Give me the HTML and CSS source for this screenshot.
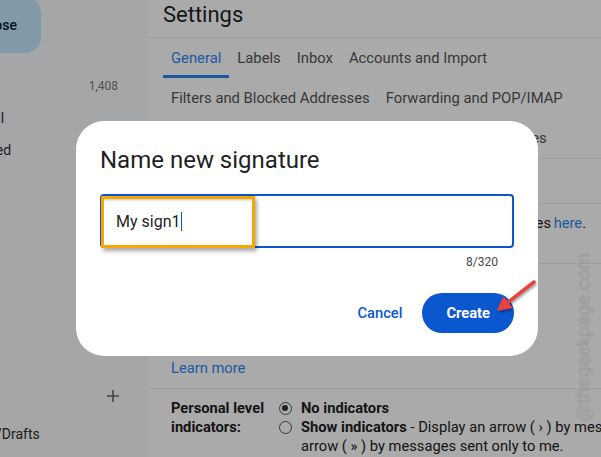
FILE: index.html
```html
<!DOCTYPE html>
<html lang="en">

<head>
    <meta charset="UTF-8">
    <meta name="viewport" content="width=device-width, initial-scale=1.0">
    <title>Settings - Name new signature</title>
    <link rel="stylesheet" href="styles.css">
</head>

<body>
    <div class="app">
        <aside class="sidebar">
            <div class="compose">Compose</div>
            <nav class="nav">
                <div class="nav-item"><span>Inbox</span><span class="count">1,408</span></div>
                <div class="nav-item"><span>Social</span></div>
                <div class="nav-item"><span>Starred</span></div>
            </nav>
            <div class="labels-head">
                <span>Labels</span>
                <svg class="plus" width="12" height="12" viewBox="0 0 12 12">
                    <path d="M6 0v12M0 6h12" stroke="currentColor" stroke-width="1.6" />
                </svg>
            </div>
            <div class="nav-item sub"><span>[Imap]/Drafts</span></div>
        </aside>

        <main class="main">
            <header class="settings-head">
                <h1>Settings</h1>
            </header>

            <div class="tabs">
                <div class="tab-row">
                    <span class="tab active">General</span>
                    <span class="tab">Labels</span>
                    <span class="tab">Inbox</span>
                    <span class="tab">Accounts and Import</span>
                </div>
                <div class="tab-row">
                    <span class="tab">Filters and Blocked Addresses</span>
                    <span class="tab">Forwarding and POP/IMAP</span>
                </div>
                <div class="tab-row">
                    <span class="tab">Add-ons</span>
                    <span class="tab">Chat and Meet</span>
                    <span class="tab">Advanced</span>
                    <span class="tab">Offline</span>
                    <span class="tab">Themes</span>
                </div>
            </div>

            <div class="setting picture">
                <div class="setting-label">My picture:</div>
                <div class="setting-value">Change picture</div>
            </div>

            <div class="setting ads">
                <div class="setting-label">Ad signals:</div>
                <div class="setting-value">You can view and change your preferences <a href="#">here</a>.</div>
            </div>

            <div class="setting">
                <div class="setting-label">
                    Signature:
                    <span class="note">(appended at the end of all outgoing messages)</span>
                    <a href="#">Learn more</a>
                </div>
                <div class="setting-value">
                    <div>No signatures</div>
                    <span class="create-new">+ Create new</span>
                </div>
            </div>

            <div class="setting">
                <div class="setting-label">Personal level indicators:</div>
                <div class="setting-value">
                    <div class="option"><span class="radio checked"></span><span><b>No indicators</b></span></div>
                    <div class="option"><span class="radio"></span><span><b>Show indicators</b> - Display an arrow ( › ) by messages sent to my address (not a mailing list), and a double arrow ( » ) by messages sent only to me.</span></div>
                </div>
            </div>
        </main>
    </div>

    <div class="scrim"></div>

    <div class="dialog">
        <h2 class="dialog-title">Name new signature</h2>
        <div class="field">
            <div class="field-input"><span>My sign1</span><span class="caret"></span></div>
            <div class="highlight"></div>
        </div>
        <div class="counter">8/320</div>
        <div class="actions">
            <button class="btn-text">Cancel</button>
            <button class="btn-filled">Create</button>
        </div>
    </div>

    <svg class="pointer" width="56" height="46" viewBox="0 0 56 46">
        <path d="M44 7 L17.5 27.6" stroke="#e8433f" stroke-width="3.5" stroke-linecap="round" />
        <path d="M8 35 L21.5 32.5 L13.6 22.6 Z" fill="#e8433f" stroke="#e8433f" stroke-width="1.5" stroke-linejoin="round" />
    </svg>

    <div class="watermark">@thegeekpage.com</div>
</body>

</html>
```

FILE: styles.css
```css
* {
    box-sizing: border-box;
}

body {
    margin: 0;
    overflow: hidden;
    font-family: Roboto, "Liberation Sans", sans-serif;
    font-size: 14px;
    color: #1f1f1f;
    background: #fff;
}

a {
    color: #2c86f5;
    text-decoration: none;
}

.app {
    display: flex;
    width: 980px;
    height: 457px;
    overflow: hidden;
}

/* left nav, scrolled partly out of view */
.sidebar {
    width: 148px;
    flex: none;
    overflow: hidden;
    background: #f8f9fc;
    color: #2e2e2e;
}

.compose {
    display: flex;
    align-items: center;
    justify-content: flex-end;
    width: 151px;
    height: 56px;
    margin: -3px 0 17px -110px;
    padding-right: 24px;
    border-radius: 16px;
    background: #c4e6fc;
    color: #001d35;
    font-weight: 500;
}

.nav-item {
    display: flex;
    align-items: center;
    height: 32px;
    margin-left: -50px;
    padding: 0 30px 0 16px;
}

.count {
    margin-left: auto;
    font-size: 12px;
    color: #7a7a7a;
}

.labels-head {
    display: flex;
    align-items: center;
    justify-content: space-between;
    height: 44px;
    margin: 208px 0 0 -90px;
    padding: 0 29px 0 12px;
    font-size: 16px;
}

.plus {
    color: #666;
}

.nav-item.sub {
    padding-left: 7px;
}

/* settings page */
.main {
    flex: 1;
    background: #fff;
    font-size: 14.7px;
}

.settings-head {
    height: 38px;
    padding-left: 15px;
    border-bottom: 1px solid #ececec;
}

.settings-head h1 {
    margin: 0;
    font-size: 22px;
    font-weight: 400;
    line-height: 30px;
    color: #1f1f1f;
}

.tabs {
    padding-left: 15px;
    border-bottom: 1px solid #ececec;
    font-size: 14.8px;
}

.tab-row {
    display: flex;
    height: 40px;
}

.tab {
    display: flex;
    align-items: center;
    padding: 0 8px;
    color: #555;
}

.tab.active {
    color: #2c86f5;
    box-shadow: inset 0 -3px #2c86f5;
}

.setting {
    display: grid;
    grid-template-columns: 108px 1fr;
    padding: 10px 0 10px 23px;
    line-height: 19px;
    border-bottom: 1px solid #ececec;
}

.setting.picture {
    min-height: 45px;
}

.setting.ads {
    min-height: 60px;
}

.setting.ads .setting-value {
    word-spacing: -1px;
}

.setting-label {
    font-weight: 700;
    color: #222;
}

.setting-label .note {
    display: block;
    margin: 2px 0 16px;
    font-size: 12px;
    line-height: 16px;
    font-weight: 400;
    color: #666;
}

.setting-label a {
    font-weight: 400;
}

.setting-value {
    width: 730px;
    color: #222;
}

.create-new {
    display: inline-block;
    margin-top: 10px;
    padding: 8px 16px;
    border-radius: 18px;
    color: #2c86f5;
}

.option {
    display: flex;
    gap: 9px;
}

.radio {
    flex: none;
    width: 13px;
    height: 13px;
    margin-top: 3px;
    border: 1.5px solid #555;
    border-radius: 50%;
    position: relative;
}

.radio.checked::after {
    content: "";
    position: absolute;
    left: 2px;
    top: 2px;
    width: 6px;
    height: 6px;
    border-radius: 50%;
    background: #333;
}

/* modal */
.scrim {
    position: fixed;
    inset: 0;
    background: rgba(0, 0, 0, 0.333);
}

.dialog {
    position: absolute;
    left: 76px;
    top: 121px;
    width: 462px;
    height: 235px;
    padding: 23px 24px;
    border-radius: 28px;
    background: #fff;
}

.dialog-title {
    margin: 0 0 18px;
    font-size: 24px;
    font-weight: 400;
    line-height: 32px;
    color: #1f1f1f;
}

.field {
    position: relative;
}

.field-input {
    display: flex;
    align-items: center;
    height: 54px;
    padding-left: 14px;
    border: 2px solid #0b57d0;
    border-radius: 4px;
    font-size: 16px;
    color: #1f1f1f;
}

.caret {
    width: 1px;
    height: 19px;
    margin-left: 1px;
    background: #0b57d0;
}

.highlight {
    position: absolute;
    left: 1px;
    top: 2px;
    width: 154px;
    height: 52px;
    border: 3px solid #f7a800;
    box-shadow: 2px 3px 4px rgba(0, 0, 0, 0.35), inset 0 3px 3px -2px rgba(0, 0, 0, 0.25);
}

.counter {
    margin-top: 6px;
    padding-right: 16px;
    text-align: right;
    font-size: 12px;
    line-height: 16px;
    color: #444746;
}

.actions {
    display: flex;
    justify-content: flex-end;
    gap: 8px;
    margin-top: 23px;
}

.actions button {
    height: 40px;
    border: 0;
    border-radius: 20px;
    font-family: inherit;
    font-size: 14.7px;
}

.btn-text {
    padding: 0 12px;
    background: none;
    color: #0b57d0;
    font-weight: 500;
}

.btn-filled {
    padding: 0 24px;
    background: #0b57d0;
    color: #fff;
    font-weight: 700;
}

/* annotation arrow and watermark */
.pointer {
    position: absolute;
    left: 490px;
    top: 275px;
    filter: drop-shadow(1px 2px 1px rgba(0, 0, 0, 0.35));
}

.watermark {
    position: absolute;
    left: 583px;
    top: 337px;
    transform: translate(-50%, -50%) rotate(-90deg);
    font-size: 19px;
    white-space: nowrap;
    color: rgba(255, 255, 255, 0.3);
    text-shadow: 0 0 1px rgba(0, 0, 0, 0.35);
}
```
